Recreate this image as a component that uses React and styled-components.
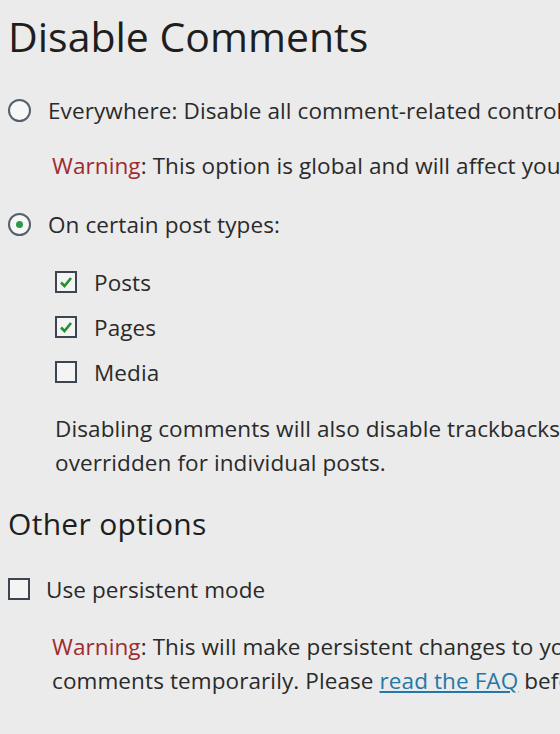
import React from "react";
import styled, { createGlobalStyle } from "styled-components";

const GlobalStyle = createGlobalStyle`
  html, body {
    margin: 0;
    padding: 0;
    background: #ebebeb;
  }
  body {
    font-family: "Open Sans", "Noto Sans", sans-serif;
    color: #2a2a2a;
    overflow: hidden;
  }
`;

const Page = styled.div`
  width: 560px;
  height: 734px;
  overflow: hidden;
  padding: 8px 0 0 8px;
  box-sizing: border-box;
  white-space: nowrap;
`;

const Title = styled.h1`
  margin: 0;
  font-size: 41px;
  font-weight: 400;
  line-height: 56px;
  color: #1e1e1e;
`;

const SubTitle = styled.h2`
  margin: 0;
  font-size: 30px;
  font-weight: 400;
  letter-spacing: 0.3px;
  line-height: 40px;
  color: #1e1e1e;
`;

const Section = styled.div`
  display: flex;
  flex-direction: column;
  margin-top: ${p => p.$top || 0}px;
`;

const OptionRow = styled.label`
  display: flex;
  align-items: center;
  gap: ${p => p.$gap || 17}px;
  height: 34px;
  font-size: 22.5px;
  letter-spacing: 0.1px;
  color: #2a2a2a;
`;

const Radio = styled.span`
  width: 19px;
  height: 19px;
  border-radius: 50%;
  border: 2px solid #55606b;
  background: #f7f7f7;
  display: flex;
  align-items: center;
  justify-content: center;
  flex: none;
  &::after {
    content: "";
    width: 7px;
    height: 7px;
    border-radius: 50%;
    background: ${p => (p.$checked ? "#2f9a45" : "transparent")};
  }
`;

const Box = styled.span`
  width: 18px;
  height: 18px;
  border: 2px solid #3b4651;
  background: #f4f4f4;
  display: flex;
  align-items: center;
  justify-content: center;
  flex: none;
  svg {
    display: block;
  }
`;

const Indent = styled.div`
  padding-left: ${p => p.$left || 44}px;
  display: flex;
  flex-direction: column;
  gap: ${p => p.$gap || 0}px;
`;

const Note = styled.p`
  margin: 0;
  font-size: 22.5px;
  letter-spacing: 0.1px;
  line-height: 34px;
  color: #2a2a2a;
`;

const Warn = styled.span`
  color: #9e2a2f;
`;

const FaqLink = styled.a`
  color: #2477a6;
  text-decoration: underline;
`;

const Check = () => (
  <svg width="14" height="12" viewBox="0 0 14 12">
    <path d="M2 6.5 L5.5 10 L12 2" fill="none" stroke="#239130" strokeWidth="2.6" />
  </svg>
);

const Checkbox = ({ checked }) => <Box>{checked && <Check />}</Box>;

export default function App() {
  return (
    <Page>
      <GlobalStyle />
      <Title>Disable Comments</Title>

      <Section $top={29}>
        <OptionRow>
          <Radio />
          Everywhere: Disable all comment-related controls and settings in WordPress.
        </OptionRow>
        <Indent $left={44}>
          <Note style={{ marginTop: 22 }}>
            <Warn>Warning</Warn>: This option is global and will affect your entire site.
          </Note>
        </Indent>
        <OptionRow style={{ marginTop: 24 }}>
          <Radio $checked />
          On certain post types:
        </OptionRow>
        <Indent $left={47} $gap={11} style={{ marginTop: 24 }}>
          <OptionRow $gap={17}>
            <Checkbox checked />
            Posts
          </OptionRow>
          <OptionRow $gap={17}>
            <Checkbox checked />
            Pages
          </OptionRow>
          <OptionRow $gap={17}>
            <Checkbox />
            Media
          </OptionRow>
          <Note style={{ marginTop: 12 }}>
            Disabling comments will also disable trackbacks and pingbacks. All comment-related fields
            <br />
            overridden for individual posts.
          </Note>
        </Indent>
      </Section>

      <Section $top={24}>
        <SubTitle>Other options</SubTitle>
        <OptionRow style={{ marginTop: 28 }} $gap={16}>
          <Checkbox />
          Use persistent mode
        </OptionRow>
        <Indent $left={44}>
          <Note style={{ marginTop: 24 }}>
            <Warn>Warning</Warn>: This will make persistent changes to your database
            <br />
            comments temporarily. Please <FaqLink href="#">read the FAQ</FaqLink> before selecting this option.
          </Note>
        </Indent>
      </Section>
    </Page>
  );
}
